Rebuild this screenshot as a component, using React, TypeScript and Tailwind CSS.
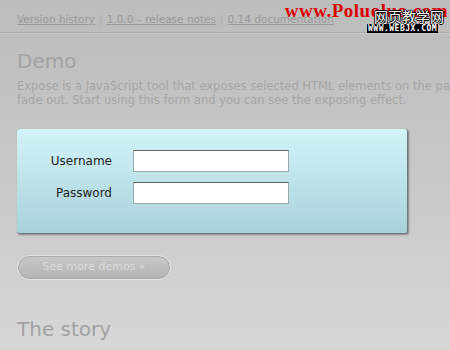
export default function App() {
  return (
    <div className="relative w-[450px] h-[350px] overflow-hidden bg-gradient-to-b from-[#bcbcbc] via-[#c8c8c8] to-[#d7d7d7] font-['DejaVu_Sans',sans-serif]">
      {/* Top links */}
      <div className="h-[33px] border-b border-[#acacac] pl-[17px] pt-[12px] text-[10.5px] leading-[14px] text-[#999] whitespace-nowrap">
        <a className="underline">Version history</a>
        <span className="mx-[4px] text-[#aaa]">|</span>
        <a className="underline">1.0.0 – release notes</a>
        <span className="mx-[4px] text-[#aaa]">|</span>
        <a className="underline">0.14 documentation</a>
      </div>
      <div className="border-t border-[#cacaca]" />

      <div className="pl-[17px]">
        <h1 className="mt-[14px] text-[20px] leading-[26px] text-[#a2a2a2]">Demo</h1>
        <p className="mt-[5px] whitespace-nowrap text-[11.5px] leading-[14px] text-[#a6a6a6]">
          Expose is a JavaScript tool that exposes selected HTML elements on the page so that the rest of the page gets
          <br />
          fade out. Start using this form and you can see the exposing effect.
        </p>

        {/* Form */}
        <div className="mt-[22px] w-[391px] h-[105px] rounded-[3px] bg-gradient-to-b from-[#d2f4f9] to-[#a9d2d9] border-r border-b border-[#6a7a7d] shadow-[1px_1px_2px_rgba(0,0,0,0.35)] pt-[21px]">
          <div className="flex items-center h-[22px]">
            <label className="w-[95px] text-right text-[12px] text-[#222]">Username</label>
            <input className="ml-[21px] w-[156px] h-[22px] bg-white border border-[#9aa] border-t-[#666] outline-none" />
          </div>
          <div className="flex items-center h-[22px] mt-[10px]">
            <label className="w-[95px] text-right text-[12px] text-[#222]">Password</label>
            <input type="password" className="ml-[21px] w-[156px] h-[22px] bg-white border border-[#9aa] border-t-[#666] outline-none" />
          </div>
        </div>

        <button className="mt-[21px] w-[154px] h-[25px] rounded-full border border-[#e4e4e4] bg-gradient-to-b from-[#c9c9c9] to-[#b3b3b3] shadow-[inset_0_0_0_1px_#a9a9a9] text-[11px] text-[#dcdcdc]">
          See more demos »
        </button>

        <h2 className="mt-[36px] text-[20px] leading-[26px] text-[#a2a2a2]">The story</h2>
      </div>

      {/* Watermark */}
      <div className="absolute right-[2px] top-[1px] text-right leading-none">
        <div className="font-['Liberation_Serif',serif] font-bold text-[19px] text-[#d00] tracking-[0.5px]">www.Poluoluo.com</div>
      </div>
      <div className="absolute left-[374px] top-[8px] text-[14px] leading-[16px] text-white font-['Noto_Sans_CJK_SC',sans-serif] [text-shadow:1px_0_#000,-1px_0_#000,0_1px_#000,0_-1px_#000]">
        网页教学网
      </div>
      <div className="absolute left-[367px] top-[24px] bg-black px-[1px] text-[8px] leading-[9px] text-white font-['DejaVu_Sans_Mono',monospace] font-bold tracking-[0.5px]">
        WWW.WEBJX.COM
      </div>
    </div>
  );
}
